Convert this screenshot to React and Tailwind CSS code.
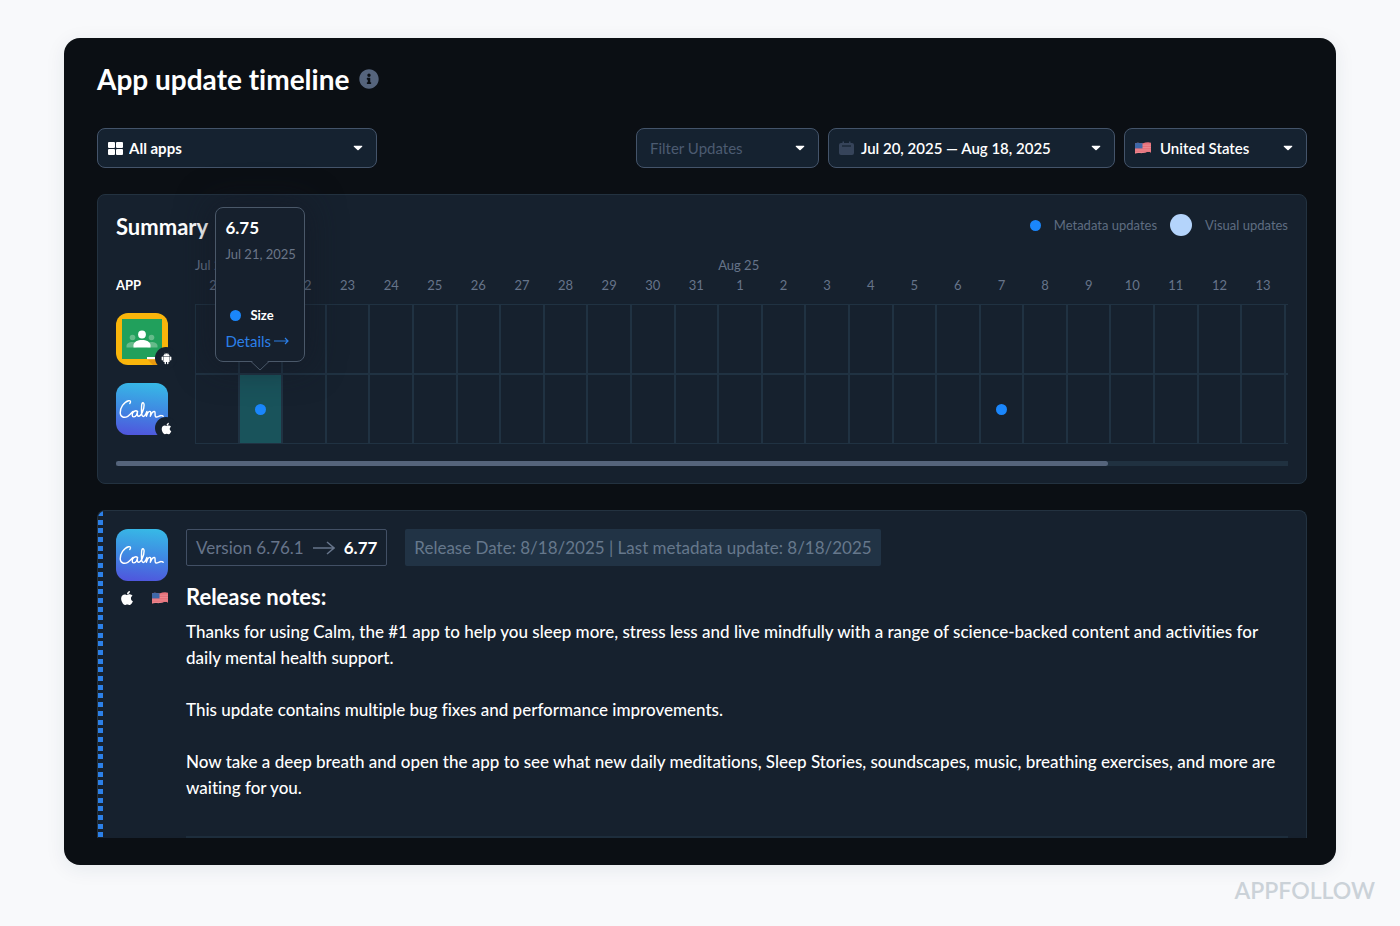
import { FaApple, FaInfoCircle } from 'react-icons/fa'
import { AiFillAndroid } from 'react-icons/ai'

const days = [
  20, 21, 22, 23, 24, 25, 26, 27, 28, 29, 30, 31,
  1, 2, 3, 4, 5, 6, 7, 8, 9, 10, 11, 12, 13
]

const apps = [
  { name: 'Google Classroom', Icon: ClassroomIcon, Store: AiFillAndroid, updates: [] },
  { name: 'Calm', Icon: CalmIcon, Store: FaApple, updates: [1, 18], active: 1 }
]

const notes = [
  'Thanks for using Calm, the #1 app to help you sleep more, stress less and live mindfully with a range of science-backed content and activities for daily mental health support.',
  'This update contains multiple bug fixes and performance improvements.',
  'Now take a deep breath and open the app to see what new daily meditations, Sleep Stories, soundscapes, music, breathing exercises, and more are waiting for you.'
]

function ClassroomIcon() {
  return (
    <svg viewBox="0 0 52 52" className="block size-[52px] rounded-xl" aria-hidden="true">
      <rect width="52" height="52" fill="#f9b50b" />
      <rect x="6" y="6" width="40" height="40" fill="#21a05c" />
      <g fill="#65bb8a">
        <circle cx="16.5" cy="24.5" r="2.8" />
        <circle cx="35.5" cy="24.5" r="2.8" />
        <path d="M10.5 34.5v-1.6c0-2.4 3-3.9 6-3.9 1.4 0 2.8.3 4 .9v4.6z" />
        <path d="M41.5 34.5v-1.6c0-2.4-3-3.9-6-3.9-1.4 0-2.8.3-4 .9v4.6z" />
      </g>
      <circle cx="26" cy="21.5" r="3.9" fill="#fff" />
      <path d="M17.5 34.5v-2.2c0-3.4 4.2-5.3 8.5-5.3s8.5 1.9 8.5 5.3v2.2z" fill="#fff" />
      <path d="M31 46h9l6 6h-9z" fill="#e99a10" />
      <rect x="31" y="44" width="9" height="2.2" fill="#fff" />
    </svg>
  )
}

function CalmIcon() {
  return (
    <svg viewBox="0 0 52 52" className="block size-[52px] rounded-xl" aria-hidden="true">
      <defs>
        <linearGradient id="calm" x1="0.55" y1="0" x2="0.45" y2="1">
          <stop offset="0" stopColor="#37b8e6" />
          <stop offset="0.5" stopColor="#3f8ae2" />
          <stop offset="1" stopColor="#4f57dd" />
        </linearGradient>
      </defs>
      <rect width="52" height="52" fill="url(#calm)" />
      <path
        d="M13.800 20.500c1.300-1.600.8-3.200-1.200-2.800-4.600 1-8.800 7.600-8.400 12.300.3 4.300 4.200 5.300 7.600 3.300 2-1.200 3.800-3.300 5.200-4.900M21.300 28.400c-1.600-1.700-5.200.6-5.100 3.600.1 2.600 3 2.300 4.200.1.600-1.200 1-2.500 1.200-3.700-.4 2.200-.6 4.900 1 4.900 2.300 0 5.600-6.800 5.500-11.200-.1-3.300-2.300-3.200-2.500.7-.2 3.900-.6 10.700 1.700 10.700 1.800 0 2.800-2.900 3.600-5.100l-.5 4.900c.8-2.400 2.300-5 3.600-4.900 1.500.1.400 3.300.3 4.900.9-2.300 2.500-4.900 4-4.800 1.800.1-.3 5 1.700 5.500 1.600.4 3.500-1.600 5.300-1.500 1 0 1.500.4 1.900.8"
        fill="none"
        stroke="#fff"
        strokeWidth="1.4"
        strokeLinecap="round"
        strokeLinejoin="round"
      />
    </svg>
  )
}

function Flag() {
  return (
    <svg viewBox="0 0 16 12" className="h-3 w-4 shrink-0" aria-hidden="true">
      <clipPath id="wave">
        <path d="M0 1.5C3-.2 5.5 1.8 8 1.2S13-.4 16 .8v9.7c-3-1.2-5.500 0-8 .6S3 10.200 0 11.800z" />
      </clipPath>
      <g clipPath="url(#wave)">
        <rect width="16" height="12" fill="#e5707a" />
        <path d="M0 3.2h16M0 5.6h16M0 8h16M0 10.3h16" stroke="#ed9298" strokeWidth="0.8" />
        <rect width="7.5" height="6.4" fill="#3f68a8" />
      </g>
    </svg>
  )
}

function Caret() {
  return (
    <svg viewBox="0 0 10 6" className="pointer-events-none h-[6px] w-[10px] shrink-0" aria-hidden="true">
      <path d="M1.3.8h7.4c.6 0 .8.6.4 1L5.6 5.1a.9.9 0 0 1-1.2 0L.9 1.8c-.4-.4-.2-1 .4-1z" fill="#fff" />
    </svg>
  )
}

function Select({ label, option, icon, width, text }) {
  return (
    <div className={`flex h-10 items-center rounded-lg border border-[#44546a] bg-[#152230] pr-[13px] ${width}`}>
      {icon}
      <select
        aria-label={label}
        className={`h-6 min-w-0 flex-1 appearance-none bg-transparent text-[15px] leading-6 outline-none ${text}`}
      >
        <option>{option}</option>
      </select>
      <Caret />
    </div>
  )
}

function UpdateTooltip() {
  return (
    <div
      role="tooltip"
      className="absolute bottom-full left-1/2 z-10 mb-[13px] flex h-[155px] w-[90px] -translate-x-1/2 flex-col rounded-lg border border-[#4a5869] bg-[#16202d] pl-[9px] text-left shadow-[0_0_32px_6px_rgba(20,24,36,0.5)]"
    >
      <p className="mt-2 text-[17px] leading-6 font-bold text-white">6.75</p>
      <p className="mt-1 text-[13px] leading-5 whitespace-nowrap text-[#6a7587]">Jul 21, 2025</p>
      <p className="mt-auto flex items-center gap-[9px] pl-[5px] text-[13px] leading-5 font-bold text-white">
        <span className="size-[11px] rounded-full bg-[#1a86fb]" />
        Size
      </p>
      <a href="#details" className="mt-1 mb-2 flex items-center gap-[3px] text-[15px] leading-6 text-[#2b7fe8]">
        Details
        <svg viewBox="0 0 15 8" className="h-2 w-[15px]" fill="none" stroke="currentColor" aria-hidden="true">
          <path d="M0 4h14M11 1l3 3-3 3" strokeWidth="1.2" />
        </svg>
      </a>
      <svg viewBox="0 0 20 10" className="absolute top-full left-1/2 h-[10px] w-5 -translate-x-1/2" aria-hidden="true">
        <path d="M1-1h18l-9 10z" fill="#16202d" />
        <path d="M1 .5l9 8.5 9-8.5" fill="none" stroke="#4a5869" />
      </svg>
    </div>
  )
}

function Timeline() {
  return (
    <table className="w-full table-fixed border-separate border-spacing-0 text-[13px] text-[#66748a]">
      <colgroup>
        <col className="w-[79px]" />
        {days.map((day) => <col key={day} />)}
        <col className="w-[3px]" />
      </colgroup>
      <thead>
        <tr className="h-5">
          <td />
          <th colSpan={12} className="p-0 text-left leading-5 font-normal">Jul 25</th>
          <th colSpan={13} className="p-0 text-left leading-5 font-normal">Aug 25</th>
          <td />
        </tr>
        <tr className="h-[29px] align-top">
          <th className="p-0 text-left leading-5 font-bold text-white">APP</th>
          {days.map((day) => <th key={day} className="p-0 text-center leading-5 font-normal">{day}</th>)}
          <td />
        </tr>
      </thead>
      <tbody>
        {apps.map(({ name, Icon, Store, updates, active }) => (
          <tr key={name} className="h-[70px]">
            <th className="p-0 text-left" aria-label={name}>
              <div className="relative w-[52px]">
                <Icon />
                <span className="absolute -right-[9px] -bottom-1 flex size-[22px] items-center justify-center rounded-full bg-[#16212e] text-white">
                  <Store className="size-[13px]" />
                </span>
              </div>
            </th>
            {days.map((day, i) => (
              <td key={day} className={`border border-[#203242] p-0 ${i === active ? 'bg-[#19535b]' : ''}`}>
                {updates.includes(i) && (
                  <div className="relative flex h-[68px] items-center justify-center">
                    <span className="size-[11px] rounded-full bg-[#1a86fb]" />
                    {i === active && <UpdateTooltip />}
                  </div>
                )}
              </td>
            ))}
            <td className="border-y border-l border-[#203242] p-0" />
          </tr>
        ))}
      </tbody>
    </table>
  )
}

export default function App() {
  return (
    <div className="min-h-screen bg-[#f8f9fb] px-16 pt-[38px] font-['Lato',sans-serif] [font-variant-ligatures:none]">
      <main className="rounded-2xl bg-[#0b0f14] pt-[23px] pr-[29px] pb-[27px] pl-[33px] text-white shadow-[0_4px_20px_rgba(30,50,80,0.08)]">
        <header className="flex items-center gap-[10px]">
          <h1 className="text-[28px] leading-9 font-bold">App update timeline</h1>
          <FaInfoCircle className="size-5 text-[#55647c]" />
        </header>

        {/* Filters */}
        <div className="mt-[31px] flex items-center gap-[9px]">
          <Select
            label="Apps"
            option="All apps"
            width="w-[280px]"
            text="pl-[6px] font-bold"
            icon={
              <svg viewBox="0 0 15 13" className="ml-[10px] h-[13px] w-[15px]" fill="#fff" aria-hidden="true">
                <rect width="7" height="6" rx="1" />
                <rect x="8" width="7" height="6" rx="1" />
                <rect y="7" width="7" height="6" rx="1" />
                <rect x="8" y="7" width="7" height="6" rx="1" />
              </svg>
            }
          />
          <Select label="Filter" option="Filter Updates" width="ml-auto w-[183px]" text="pl-[13px] text-[#4c5b71]" />
          <button
            type="button"
            className="flex h-10 w-[287px] items-center rounded-lg border border-[#44546a] bg-[#152230] pr-[13px] pl-[10px] text-[15px] leading-6 font-semibold"
          >
            <svg viewBox="0 0 15 14" className="mr-[7px] h-[14px] w-[15px]" fill="#36445a" aria-hidden="true">
              <path d="M2 2h1.5V.5H5V2h5V.5h1.5V2H13a2 2 0 0 1 2 2v8a2 2 0 0 1-2 2H2a2 2 0 0 1-2-2V4a2 2 0 0 1 2-2z" />
              <path d="M3 5h9" stroke="#152230" strokeWidth="1.2" />
            </svg>
            <span className="flex-1 text-left">Jul 20, 2025 — Aug 18, 2025</span>
            <Caret />
          </button>
          <Select
            label="Country"
            option="United States"
            width="w-[183px]"
            text="pl-[9px] font-semibold"
            icon={<span className="ml-[10px]"><Flag /></span>}
          />
        </div>

        {/* Summary */}
        <section className="mt-[26px] rounded-lg border border-[#233240] bg-[#16212e] px-[18px] pb-[17px]">
          <div className="flex items-start justify-between pt-[18px]">
            <h2 className="text-[22px] leading-7 font-bold">Summary</h2>
            <div className="flex items-center text-[13px] leading-6 text-[#5f6d81]">
              <span className="mr-[13px] size-[11px] rounded-full bg-[#1a86fb]" />
              Metadata updates
              <span className="mx-[13px] size-[22px] rounded-full bg-[#b4d4fb]" />
              Visual updates
            </div>
          </div>
          <div className="mt-[14px]">
            <Timeline />
          </div>
          <div className="mt-[17px] h-[5px] bg-[#203140]">
            <div className="h-full w-11/13 rounded-full bg-[#55647b]" />
          </div>
        </section>

        {/* Update details */}
        <section className="relative mt-[26px] flex gap-[18px] overflow-hidden rounded-t-lg border border-b-0 border-[#233240] bg-[#16212e] px-[18px] pt-[18px]">
          <div className="absolute inset-y-0 left-0 flex flex-col justify-between">
            {Array.from({ length: 38 }, (_, i) => <span key={i} className="size-[5px] bg-[#2c80e8]" />)}
          </div>
          <div className="w-[52px] shrink-0">
            <CalmIcon />
            <div className="mt-[9px] flex items-center justify-between pl-[3px]">
              <FaApple className="size-4" />
              <Flag />
            </div>
          </div>
          <div className="min-w-0 flex-1">
            <div className="flex items-center gap-[18px] text-[17px] leading-6">
              <p className="flex h-[37px] items-center rounded-xs border border-[#425065] px-[9px] text-[#66748a]">
                Version 6.76.1
                <svg viewBox="0 0 22 14" className="mx-[9px] h-[14px] w-[22px]" fill="none" stroke="currentColor" aria-hidden="true">
                  <path d="M0 7h21M14 1l7 6-7 6" strokeWidth="1.5" />
                </svg>
                <span className="font-bold text-white">6.77</span>
              </p>
              <p className="flex h-[37px] items-center rounded-xs bg-[#213345] px-[9px] text-[#66788c]">
                Release Date: 8/18/2025 | Last metadata update: 8/18/2025
              </p>
            </div>
            <h2 className="mt-[17px] text-[22px] leading-7 font-bold">Release notes:</h2>
            <div className="mt-2 space-y-[26px] border-b-2 border-[#1d2d3c] pb-[35px] text-[17px] leading-[26px] font-medium">
              {notes.map((note) => <p key={note}>{note}</p>)}
            </div>
          </div>
        </section>
      </main>
      <p className="-mr-[39px] pt-[11px] text-right text-[23px] leading-7 font-semibold text-[#cbd2d8]">APPFOLLOW</p>
    </div>
  )
}
